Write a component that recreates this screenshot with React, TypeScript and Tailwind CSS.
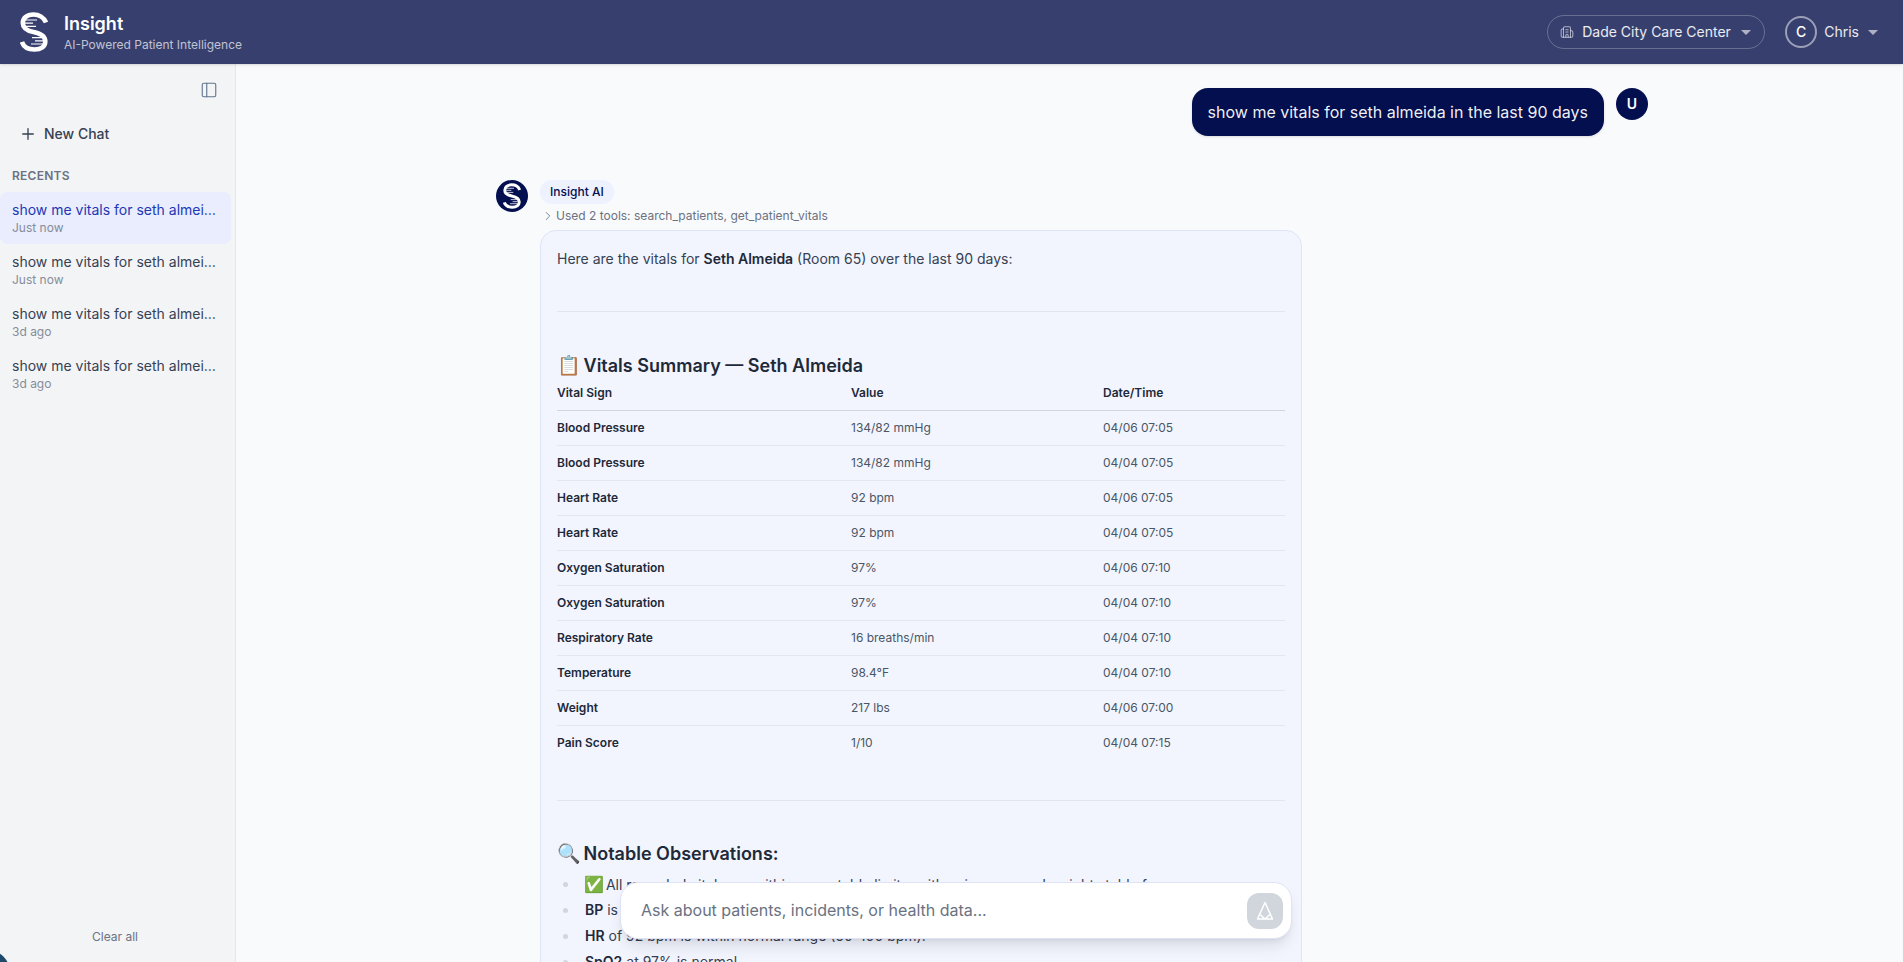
import { Building2, ChevronRight, PanelLeft, Plus } from "lucide-react";

function Logo({ className }: { className: string }) {
  return (
    <svg viewBox="0 0 28 40" fill="none" stroke="currentColor" className={className}>
      <path
        d="M26 10.5C24 5.5 19 2.5 13.5 2.5C6.5 2.5 2.8 6.5 2.8 11C2.8 16 6.5 18.6 13.5 20C21 21.5 25.3 24 25.3 29.5C25.3 34.5 21 37.5 14.5 37.5C8.5 37.5 3.5 35 2 30"
        strokeWidth="4.6"
        strokeLinecap="butt"
      />
      <path d="M5 8H17M5 11.2H13M5 14.4H16M23 25.6H12M23 28.8H15M23 32H11" strokeWidth="1.2" />
    </svg>
  );
}

function Caret() {
  return <span className="h-0 w-0 border-x-[5px] border-t-[5px] border-x-transparent border-t-white/60" />;
}

const recents = [
  { time: "Just now", active: true },
  { time: "Just now", active: false },
  { time: "3d ago", active: false },
  { time: "3d ago", active: false },
];

const rows = [
  ["Blood Pressure", "134/82 mmHg", "04/06 07:05"],
  ["Blood Pressure", "134/82 mmHg", "04/04 07:05"],
  ["Heart Rate", "92 bpm", "04/06 07:05"],
  ["Heart Rate", "92 bpm", "04/04 07:05"],
  ["Oxygen Saturation", "97%", "04/06 07:10"],
  ["Oxygen Saturation", "97%", "04/04 07:10"],
  ["Respiratory Rate", "16 breaths/min", "04/04 07:10"],
  ["Temperature", "98.4°F", "04/04 07:10"],
  ["Weight", "217 lbs", "04/06 07:00"],
  ["Pain Score", "1/10", "04/04 07:15"],
];

function Bullet({ children }: { children: React.ReactNode }) {
  return (
    <li className="flex h-[26px] items-center whitespace-nowrap pl-[6px]">
      <span className="mr-[17px] h-[5px] w-[5px] shrink-0 rounded-full bg-gray-300" />
      <span>{children}</span>
    </li>
  );
}

export default function App() {
  return (
    <div className="relative flex h-screen flex-col overflow-hidden bg-[#f9fafc] font-['Inter',sans-serif] text-[#1f2937]">
      <header className="z-10 flex h-16 shrink-0 items-center justify-between bg-[#373f6e] pr-[25px] pl-5 shadow-sm">
        <div className="flex items-center gap-4">
          <Logo className="h-10 w-7 text-white" />
          <div className="pt-[2px]">
            <div className="text-lg leading-[22px] font-semibold text-white">Insight</div>
            <div className="mt-[2px] text-xs leading-4 text-white/70">AI-Powered Patient Intelligence</div>
          </div>
        </div>
        <div className="flex items-center gap-5">
          <div className="flex h-[34px] w-[218px] items-center rounded-full border border-white/25 pl-3">
            <Building2 className="h-[14px] w-[14px] -scale-x-100 text-white/60" strokeWidth={1.75} />
            <span className="ml-[8px] text-sm text-white/90">Dade City Care Center</span>
            <span className="ml-[10px] flex"><Caret /></span>
          </div>
          <div className="flex items-center">
            <div className="flex h-8 w-8 items-center justify-center rounded-full border-2 border-white/50 text-sm font-medium text-white">C</div>
            <span className="ml-[7px] text-sm text-white/90">Chris</span>
            <span className="ml-[9px] flex"><Caret /></span>
          </div>
        </div>
      </header>
      <div className="flex min-h-0 flex-1">
        <aside className="flex w-[236px] shrink-0 flex-col border-r border-[#e5e7eb] bg-[#f3f4f6]">
          <div className="flex justify-end pt-[17px] pr-[17px]">
            <PanelLeft className="h-[18px] w-[18px] text-slate-500" strokeWidth={1.5} />
          </div>
          <div className="mt-[25px] flex h-5 items-center gap-[7px] pl-[19px] text-sm leading-5 font-medium text-gray-700">
            <Plus className="h-[18px] w-[18px]" strokeWidth={1.75} />
            New Chat
          </div>
          <div className="mt-[24px] pl-3 text-xs leading-4 font-semibold tracking-[0.02em] text-gray-500">RECENTS</div>
          <div className="mt-[8px] flex flex-col">
            {recents.map((r, i) => (
              <div key={i} className={`h-[52px] w-[231px] rounded-lg pt-[8px] pl-3 ${r.active ? "bg-[#e9edfd]" : ""}`}>
                <div className={`w-[205px] truncate text-sm leading-5 ${r.active ? "text-[#2337b5]" : "text-gray-700"}`}>
                  show me vitals for seth almeida in the last 90 days
                </div>
                <div className="text-xs leading-[16px] text-[#858c9b]">{r.time}</div>
              </div>
            ))}
          </div>
          <div className="mt-auto pr-[5px] pb-[17px] text-center text-xs leading-4 text-gray-500">Clear all</div>
        </aside>
        <main className="relative min-w-0 flex-1 overflow-hidden">
          <div className="flex justify-center pl-[5px]">
            <div className="w-[1152px] pt-6">
              <div className="flex justify-end gap-3">
                <div className="flex h-12 items-center rounded-2xl bg-[#040f4f] px-4 text-base text-white/95 shadow-sm">
                  show me vitals for seth almeida in the last 90 days
                </div>
                <div className="flex h-8 w-8 items-center justify-center rounded-full bg-[#040f4f] text-sm font-semibold text-white">U</div>
              </div>
              <div className="mt-11 flex gap-3">
                <div className="flex h-8 w-8 shrink-0 items-center justify-center rounded-full bg-[#040f4f]">
                  <Logo className="h-[26px] w-[18px] text-white" />
                </div>
                <div className="w-[762px]">
                  <div className="flex h-6 w-fit items-center rounded-full bg-[#eef1fe] px-[10px] text-xs font-medium text-[#040f4f]">Insight AI</div>
                  <div className="mb-[2px] flex h-6 items-center text-xs text-gray-500">
                    <ChevronRight className="ml-px h-[14px] w-[14px]" strokeWidth={1.5} />
                    <span className="ml-px">Used 2 tools: search_patients, get_patient_vitals</span>
                  </div>
                  <div className="rounded-t-2xl border border-[#dfe5f8] bg-[#f2f5fe] px-4 pt-4 text-sm leading-6">
                    <p className="text-gray-700">
                      Here are the vitals for <strong className="font-semibold text-gray-800">Seth Almeida</strong> (Room 65) over the last 90 days:
                    </p>
                    <hr className="mt-10 border-[#e1e5f0]" />
                    <h3 className="mt-[42px] text-lg leading-6 font-semibold text-gray-800">
                      <span className="mr-[-2px] text-[19px]">📋</span> Vitals Summary — Seth Almeida
                    </h3>
                    <table className="mt-[-1px] w-[728px] table-fixed text-xs">
                      <thead>
                        <tr className="border-b border-gray-300 text-left">
                          <th className="h-[33px] w-[294px] font-semibold text-gray-800">Vital Sign</th>
                          <th className="w-[252px] font-semibold text-gray-800">Value</th>
                          <th className="font-semibold text-gray-800">Date/Time</th>
                        </tr>
                      </thead>
                      <tbody>
                        {rows.map((r, i) => (
                          <tr key={i} className="h-[35px] border-b border-[#e3e7f1] last:border-b-0">
                            <td className="font-semibold text-gray-800">{r[0]}</td>
                            <td className="text-gray-600">{r[1]}</td>
                            <td className="text-gray-600">{r[2]}</td>
                          </tr>
                        ))}
                      </tbody>
                    </table>
                    <hr className="mt-[40px] border-[#e1e5f0]" />
                    <h4 className="mt-[41px] text-lg leading-6 font-semibold text-gray-800">
                      <span className="mr-[-2px] text-[19px]">🔍</span> Notable Observations:
                    </h4>
                    <ul className="mt-[5px] text-gray-700">
                      <Bullet><span className="-ml-px mr-[-2px] text-base">✅</span> All recorded vitals are within acceptable limits, with pain score and weight stable for now.</Bullet>
                      <Bullet><strong className="font-semibold text-gray-800">BP</strong> is slightly elevated but stable.</Bullet>
                      <Bullet><strong className="font-semibold text-gray-800">HR</strong> of 92 bpm is within normal range (60–100 bpm).</Bullet>
                      <Bullet><strong className="font-semibold text-gray-800">SpO2</strong> at 97% is normal.</Bullet>
                    </ul>
                  </div>
                </div>
              </div>
            </div>
          </div>
          <div className="absolute bottom-[23px] left-[384px] flex h-[57px] w-[672px] items-center rounded-[18px] border border-[#dfe3f5] bg-white pr-2 pl-5 shadow-lg">
            <span className="mb-[2px] flex-1 text-base text-gray-500">Ask about patients, incidents, or health data...</span>
            <div className="flex h-9 w-9 items-center justify-center rounded-xl bg-gray-300">
              <svg viewBox="0 0 24 24" fill="none" stroke="white" strokeWidth="1.5" strokeLinejoin="round" className="h-6 w-6">
                <path d="M12 3.5L19.5 20H4.5ZM7 15.5L12 20M17 15.5L12 20" />
              </svg>
            </div>
          </div>
        </main>
      </div>
      <div className="absolute top-[949px] left-[-41px] h-[52px] w-[52px] rounded-full bg-[#1d4a6b]" />
    </div>
  );
}
